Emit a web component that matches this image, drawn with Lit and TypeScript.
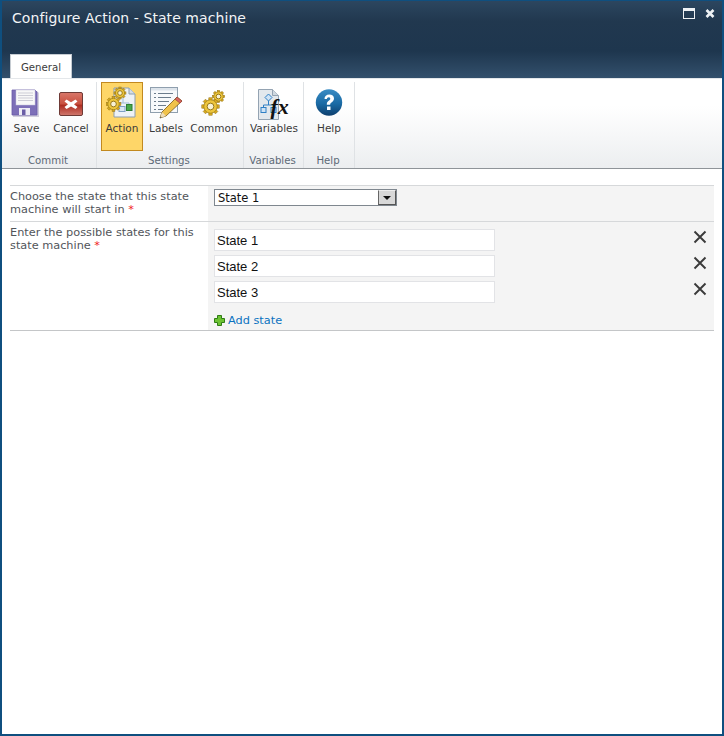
import { LitElement, html, css, svg } from "lit";
import { customElement } from "lit/decorators.js";

const gear = (cx: number, cy: number, r: number) => {
  const teeth = [0, 45, 90, 135].map(
    (a) => svg`<rect x="${cx - r * 0.25}" y="${cy - r * 1.3}" width="${r * 0.5}" height="${r * 2.6}" transform="rotate(${a} ${cx} ${cy})" fill="#d9a91f" stroke="#8f6f12" stroke-width=".5"/>`
  );
  return svg`<g>${teeth}<circle cx="${cx}" cy="${cy}" r="${r}" fill="#edc53c" stroke="#9a7a14" stroke-width=".7"/><circle cx="${cx}" cy="${cy}" r="${r * 0.5}" fill="#f8f2d4" stroke="#8f6f12" stroke-width=".9"/></g>`;
};

const icons = {
  save: html`<svg class="i-save" width="28" height="28" viewBox="0 0 28 28">
    <path d="M2 2h24l2 2v24H2z" fill="#3a2f6e" opacity=".22"/>
    <path d="M1 1h23l2 2v23H1z" fill="#7d6fb8" stroke="#6a5ca8" stroke-width=".8"/>
    <rect x="5" y="1" width="19" height="15" fill="#f8f8f8" stroke="#c8c6dc" stroke-width=".5"/>
    <path d="M7 4h15M7 6.500h15M7 9h15M7 11.500h15" stroke="#cdcdd6"/>
    <rect x="8" y="19" width="11" height="7" fill="#eeedf5"/>
    <rect x="11" y="20.500" width="3.500" height="5.500" fill="#6a5ea6"/>
  </svg>`,
  cancel: html`<svg class="i-cancel" width="26" height="26" viewBox="0 0 26 26">
    <defs><linearGradient id="cg" x1="0" y1="0" x2="0" y2="1">
      <stop offset="0" stop-color="#d9776a"/><stop offset=".5" stop-color="#c8503f"/>
      <stop offset=".55" stop-color="#ad2c20"/><stop offset="1" stop-color="#d0796e"/></linearGradient></defs>
    <rect x="1.500" y=".5" width="23" height="23" rx="1.500" fill="url(#cg)" stroke="#6e3a36"/>
    <path d="M8.500 7.500l4.500 2.700 4.500-2.700 2 2-3.500 2.800 3.500 2.800-2 2-4.500-2.700-4.500 2.700-2-2 3.500-2.800-3.500-2.800z" fill="#fff"/>
  </svg>`,
  action: html`<svg class="i-action" width="32" height="33" viewBox="0 0 32 33">
    <path d="M8 3h15l6 6v23H8z" fill="#eef2f6" stroke="#8d9eae"/>
    <path d="M23 3v6h6" fill="#d5dde5" stroke="#8d9eae"/>
    <path d="M17 13v5h-4v4M17 18h6v2" fill="none" stroke="#9fbbd8"/>
    <rect x="13" y="21.500" width="6" height="5" fill="#dbe8f4" stroke="#7fa0c4"/>
    <rect x="20.500" y="19.500" width="5.500" height="6" fill="#46a84a" stroke="#2d7f33"/>
    ${gear(14, 8, 4.600)}${gear(7.500, 19, 5.700)}
  </svg>`,
  labels: html`<svg class="i-labels" width="34" height="34" viewBox="0 0 34 34">
    <rect x="1.500" y="1.500" width="27" height="25" fill="#f7f9fb" stroke="#8f9fae"/>
    <rect x="2" y="2" width="26" height="2.500" fill="#dde4eb"/>
    <path d="M5 7.500h2M9 7.500h15M5 11.500h2M9 11.500h13M5 15.500h2M9 15.500h11M5 19.500h2M9 19.500h8M5 23.500h2M9 23.500h5" stroke="#6c7c8c"/>
    <path d="M28 11l5 4-16 15-6 2 2-6z" fill="#f0c24a" stroke="#7a5a18" stroke-width=".8"/>
    <path d="M28 11l5 4-2 2.200-5-4z" fill="#d9655e" stroke="#8a3a34" stroke-width=".6"/>
    <path d="M13 26l4 4-6 2z" fill="#eddcb8"/>
    <path d="M11 32l1.600-.5-1-1z" fill="#333"/>
  </svg>`,
  common: html`<svg class="i-common" width="26" height="27" viewBox="0 0 26 27">
    ${gear(17.500, 7.500, 4.700)}${gear(9.500, 17.500, 6.700)}
  </svg>`,
  vars: html`<svg class="i-vars" width="32" height="32" viewBox="0 0 32 32">
    <path d="M.5 .5h14l6 6v24H.5z" fill="#e3e8ed" stroke="#94a3b2"/>
    <path d="M14.500 .5v6h6" fill="#cfd8e0" stroke="#94a3b2"/>
    <path d="M10.500 5l3.500 3.500-3.500 3.500L7 8.500z" fill="#cfe3f6" stroke="#2f7fc4"/>
    <path d="M10.500 12v4h-5v2.500M10.500 16h5v2.500" fill="none" stroke="#2f7fc4"/>
    <rect x="3" y="18.500" width="5" height="5" fill="#cfe3f6" stroke="#2f7fc4"/>
    <rect x="13" y="18.500" width="5" height="5" fill="#cfe3f6" stroke="#2f7fc4"/>
    <text x="12.500" y="25" class="fx">fx</text>
  </svg>`,
  help: html`<svg class="i-help" width="28" height="28" viewBox="0 0 28 28">
    <defs><linearGradient id="hg" x1="0" y1="0" x2="0" y2="1">
      <stop offset="0" stop-color="#3a8cc4"/><stop offset=".55" stop-color="#1a6aa4"/>
      <stop offset="1" stop-color="#0e3f6e"/></linearGradient></defs>
    <circle cx="14" cy="13.500" r="13.200" fill="url(#hg)"/>
    <path d="M9.500 10c0-2.800 2-4.500 4.800-4.500s4.700 1.600 4.700 4c0 2-1.200 3-2.500 3.900-1 .7-1.300 1.200-1.300 2.300h-3.400c0-2 .6-3 1.900-3.900 1-.7 1.600-1.200 1.600-2.100 0-.9-.7-1.500-1.600-1.500-1 0-1.700.7-1.800 1.800z" fill="#fff"/>
    <rect x="12" y="17.500" width="3.500" height="3.500" fill="#fff"/>
  </svg>`,
};

const x = html`<svg class="x" width="14" height="14" viewBox="0 0 14 14"><path d="M1.500 1.500l11 11M12.500 1.500l-11 11" stroke="#3a3a3a" stroke-width="1.900" fill="none"/></svg>`;

@customElement("app-root")
export class AppRoot extends LitElement {
  static styles = css`
    :host { display: block; height: 736px; box-sizing: border-box; border: 2px solid #0f4f7f; border-top-width: 1px; background: #fff; font-family: "DejaVu Sans", Verdana, sans-serif; font-size: 11.300px; color: #3b3b3b; overflow: hidden; }
    .head { height: 77px; box-sizing: border-box; background: linear-gradient(#2c465f 0, #21384f 20px, #1e364e 50px, #33506c 77px); padding: 9px 10px 0; display: flex; flex-direction: column; justify-content: space-between; position: relative; }
    .title { color: #f2f4f6; font-size: 14px; letter-spacing: .07px; line-height: 16px; }
    .winbtns { position: absolute; right: 7px; top: 7px; display: flex; gap: 10px; }
    .tab { align-self: flex-start; margin-left: -2px; width: 62px; height: 24px; box-sizing: border-box; background: #fff; border: 1px solid #c6ccd2; border-bottom: 0; text-align: center; line-height: 25px; font-size: 10.200px; color: #3b3b3b; }
    .ribbon { height: 91px; box-sizing: border-box; display: flex; background: linear-gradient(#fff 30%, #eceef0); border-bottom: 1px solid #8f9499; border-top: 1px solid #e4e7ea; }
    .group { display: flex; flex-direction: column; height: 89px; box-sizing: border-box; padding-top: 3px; background: linear-gradient(#dfe2e5, #dfe2e5) right 3px / 1px 100% no-repeat; }
    .w1 { width: 95px; } .w2 { width: 147px; } .w3 { width: 60px; } .w4 { width: 51px; }
    .btns { display: flex; height: 70px; padding: 0 1px; }
    .w2 .btns { padding-left: 4px; }
    .cap { text-align: center; color: #5d6a77; font-size: 10.200px; line-height: 14px; padding: 2px 3px 0 0; }
    .btn { box-sizing: border-box; height: 69px; border: 1px solid transparent; display: flex; flex-direction: column; align-items: center; padding-top: 4px; white-space: nowrap; font-size: 10.500px; color: #3b3b3b; }
    .btn .ic { height: 35px; display: flex; align-items: flex-start; justify-content: center; }
    .btn .t { line-height: 13px; }
    .sel { background: #fed668; border-color: #c2891f; }
    .i-save { margin: 2px 3px 0 0; }
    .i-cancel { margin-top: 5px; }
    .i-action { margin-top: -2px; }
    .i-labels { margin-top: -1px; }
    .i-common, .i-vars, .i-help { margin-top: 2px; }
    .fx { font: italic bold 22px "Liberation Serif", serif; fill: #111; }
    .content { padding: 16px 8px 0; }
    .row { display: grid; grid-template-columns: 198px 1fr; border-top: 1px solid #d6d8da; }
    .row:last-child { border-bottom: 1px solid #c4c6c8; }
    .lab { line-height: 13px; padding-top: 4px; color: #51555a; }
    .req { color: #f02020; }
    .val { background: #f4f4f4; padding-left: 6px; box-sizing: border-box; }
    .r1 { height: 35px; padding-top: 3px; }
    .select { width: 183px; height: 17px; box-sizing: border-box; border: 1px solid #7f878f; background: #fff; display: flex; justify-content: space-between; align-items: stretch; color: #111; line-height: 17px; padding-left: 3px; font-size: 11.500px; }
    .arrow { width: 16px; background: #d8d8d8; border: 1px solid #555; border-top-color: #eee; border-left-color: #666; display: flex; align-items: center; justify-content: center; }
    .arrow svg { display: block; }
    .r2 { height: 108px; padding-top: 7px; }
    .states { display: flex; flex-direction: column; gap: 4px; }
    .state { display: flex; justify-content: space-between; align-items: flex-start; padding-right: 7px; }
    .input { width: 281px; height: 22px; box-sizing: border-box; border: 1px solid #e2e3e6; background: #fff; font-family: "Liberation Sans", Arial, sans-serif; font-size: 13px; line-height: 22px; padding-left: 2px; color: #111; }
    .x { margin-top: 1px; }
    .add { display: flex; align-items: center; gap: 3px; color: #0a72c0; margin-top: 11px; line-height: 13px; }
  `;

  private button(icon: unknown, text: string, w: number, sel = false) {
    return html`<div class="btn ${sel ? "sel" : ""}" style="width:${w}px"><div class="ic">${icon}</div><div class="t">${text}</div></div>`;
  }

  render() {
    return html`
      <div class="head">
        <div class="title">Configure Action - State machine</div>
        <div class="winbtns">
          <svg width="12" height="11" viewBox="0 0 12 11"><rect x=".5" y=".5" width="11" height="10" fill="none" stroke="#eef2f5"/><rect x="1" y="1" width="10" height="2" fill="#eef2f5"/></svg>
          <svg width="10" height="11" viewBox="0 0 10 11"><path d="M1.500 2l7 7M8.500 2l-7 7" stroke="#eef2f5" stroke-width="2.600"/></svg>
        </div>
        <div class="tab">General</div>
      </div>
      <div class="ribbon">
        <div class="group w1">
          <div class="btns">
            ${this.button(icons.save, "Save", 47)}${this.button(icons.cancel, "Cancel", 42)}
          </div>
          <div class="cap">Commit</div>
        </div>
        <div class="group w2">
          <div class="btns">
            ${this.button(icons.action, "Action", 42, true)}${this.button(icons.labels, "Labels", 46)}${this.button(icons.common, "Common", 50)}
          </div>
          <div class="cap">Settings</div>
        </div>
        <div class="group w3">
          <div class="btns">${this.button(icons.vars, "Variables", 58)}</div>
          <div class="cap">Variables</div>
        </div>
        <div class="group w4">
          <div class="btns">${this.button(icons.help, "Help", 48)}</div>
          <div class="cap">Help</div>
        </div>
      </div>
      <div class="content">
        <div class="row">
          <div class="lab">Choose the state that this state<br />machine will start in <span class="req">*</span></div>
          <div class="val r1">
            <div class="select">State 1<div class="arrow"><svg width="8" height="4" viewBox="0 0 8 4"><path d="M0 0h8L4 4z" fill="#111"/></svg></div></div>
          </div>
        </div>
        <div class="row">
          <div class="lab">Enter the possible states for this<br />state machine <span class="req">*</span></div>
          <div class="val r2">
            <div class="states">
              ${["State 1", "State 2", "State 3"].map((s) => html`<div class="state"><div class="input">${s}</div>${x}</div>`)}
            </div>
            <div class="add">
              <svg width="11" height="11" viewBox="0 0 11 11"><path d="M3.500 .5h4v3h3v4h-3v3h-4v-3h-3v-4h3z" fill="#6cc232" stroke="#2f7d14"/></svg>
              Add state
            </div>
          </div>
        </div>
      </div>
    `;
  }
}
